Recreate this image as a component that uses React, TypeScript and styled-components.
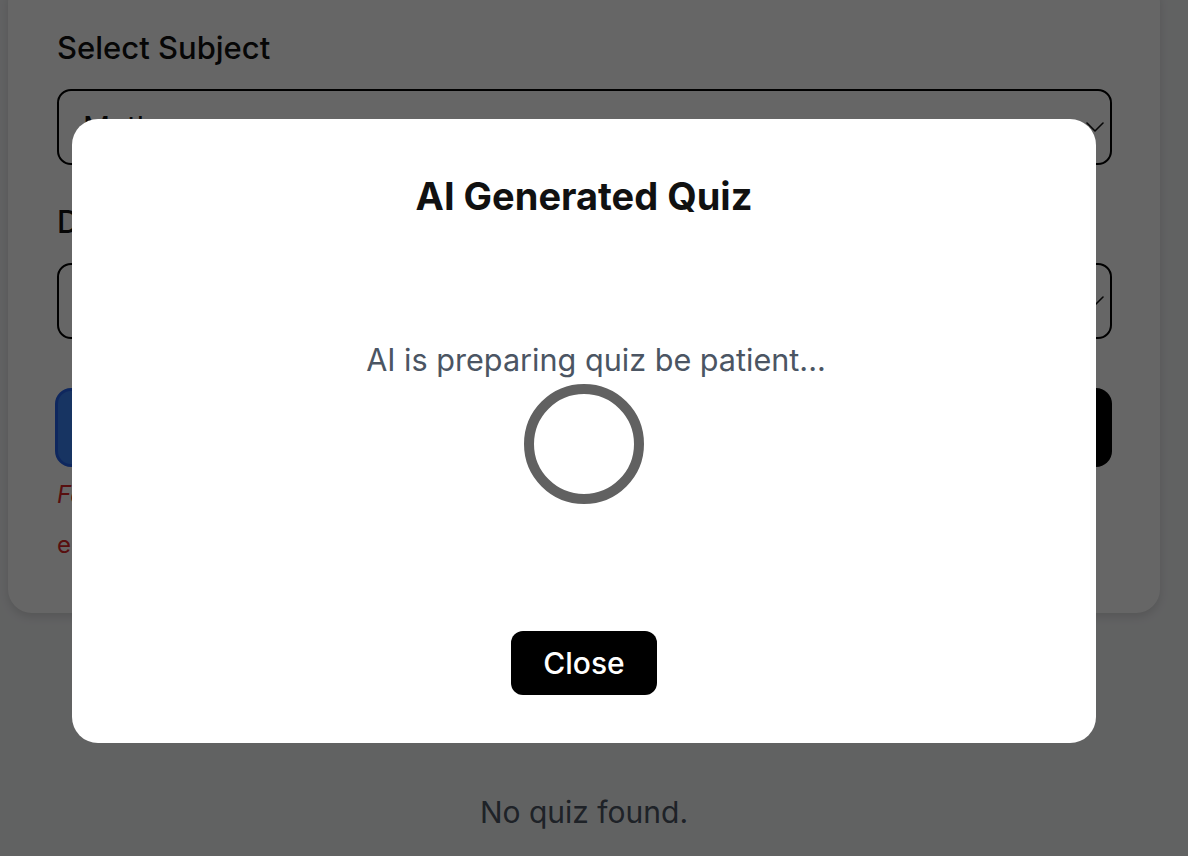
import React from "react";
import styled, { createGlobalStyle } from "styled-components";

const Global = createGlobalStyle`
  html, body { margin: 0; padding: 0; background: #f3f4f6; overflow: hidden; }
  body { font-family: Inter, "Noto Sans", sans-serif; }
  * { box-sizing: border-box; }
`;

const Page = styled.div`
  width: 1152px;
  margin: -21px 8px 0 8px;
  display: flex;
  flex-direction: column;
  align-items: stretch;
`;

const Card = styled.section`
  background: #ffffff;
  border-radius: 24px;
  box-shadow: 0 4px 10px rgba(0, 0, 0, 0.12);
  padding: 48px 48px 52px 49px;
  display: flex;
  flex-direction: column;
`;

const Field = styled.div<{ $mb: number }>`
  display: flex;
  flex-direction: column;
  gap: 20px;
  margin-bottom: ${(p) => p.$mb}px;
`;

const Label = styled.label`
  font-size: 31px;
  font-weight: 500;
  color: #111;
  line-height: 42px;
`;

const SelectBox = styled.div`
  height: 76px;
  border: 2px solid #000;
  border-radius: 14px;
  display: flex;
  align-items: center;
  justify-content: space-between;
  padding: 0 6px 0 24px;
  font-size: 30px;
  color: #111;
`;

const Buttons = styled.div`
  display: grid;
  grid-template-columns: 1fr 1fr;
  gap: 24px;
  margin: 0 0 0 -2px;
`;

const Btn = styled.button<{ $variant: "blue" | "black" }>`
  height: 79px;
  border-radius: 16px;
  font-family: inherit;
  font-size: 30px;
  font-weight: 600;
  color: #fff;
  background: ${(p) => (p.$variant === "blue" ? "#3b82f6" : "#000")};
  border: ${(p) => (p.$variant === "blue" ? "3px solid #2563eb" : "none")};
`;

const ErrorText = styled.p<{ $italic?: boolean }>`
  margin: ${(p) => (p.$italic ? "12px 0 0" : "18px 0 0")};
  font-size: 24px;
  line-height: 32px;
  color: #dc2626;
  font-style: ${(p) => (p.$italic ? "italic" : "normal")};
`;

const Empty = styled.p`
  margin: 181px 0 0;
  text-align: center;
  font-size: 30px;
  color: #4b5563;
`;

const Overlay = styled.div`
  position: fixed;
  inset: 0;
  background: rgba(0, 0, 0, 0.6);
  display: flex;
  align-items: center;
  justify-content: center;
  padding: 6px 20px 0 0;
`;

const Modal = styled.div`
  width: 1024px;
  height: 624px;
  background: #fff;
  border-radius: 26px;
  display: flex;
  flex-direction: column;
  align-items: center;
  padding: 50px 40px 48px;
`;

const Title = styled.h2`
  margin: 0;
  font-size: 38px;
  font-weight: 700;
  color: #111;
  line-height: 54px;
`;

const Body = styled.div`
  flex: 1;
  display: flex;
  flex-direction: column;
  align-items: center;
  justify-content: center;
  padding-bottom: 10px;
`;

const Status = styled.p`
  margin: 0 0 4px 24px;
  font-size: 30.6px;
  color: #4b5563;
  line-height: 40px;
`;

const Spinner = styled.div`
  width: 120px;
  height: 120px;
  border-radius: 50%;
  border: 10px solid #616161;
`;

const CloseBtn = styled.button`
  width: 146px;
  height: 64px;
  background: #000;
  color: #fff;
  border: none;
  border-radius: 12px;
  font-family: inherit;
  font-size: 30px;
  font-weight: 500;
`;

const Chevron = () => (
  <svg width="18" height="18" viewBox="0 0 18 18" fill="none" stroke="#111" strokeWidth="1.6" strokeLinecap="round" strokeLinejoin="round">
    <path d="M1 5l8 8 8-8" />
  </svg>
);

export default function App() {
  return (
    <>
      <Global />
      <Page>
        <Card>
          <Field $mb={36}>
            <Label>Select Subject</Label>
            <SelectBox>
              <span>Math</span>
              <Chevron />
            </SelectBox>
          </Field>
          <Field $mb={49}>
            <Label>Difficulty</Label>
            <SelectBox>
              <span>Easy</span>
              <Chevron />
            </SelectBox>
          </Field>
          <Buttons>
            <Btn $variant="blue">Generate Quiz</Btn>
            <Btn $variant="black">View Quizzes</Btn>
          </Buttons>
          <ErrorText $italic>Failed to generate quiz. Please try again.</ErrorText>
          <ErrorText>error: Request failed with status code 500</ErrorText>
        </Card>
        <Empty>No quiz found.</Empty>
      </Page>
      <Overlay>
        <Modal>
          <Title>AI Generated Quiz</Title>
          <Body>
            <Status>AI is preparing quiz be patient...</Status>
            <Spinner />
          </Body>
          <CloseBtn>Close</CloseBtn>
        </Modal>
      </Overlay>
    </>
  );
}
